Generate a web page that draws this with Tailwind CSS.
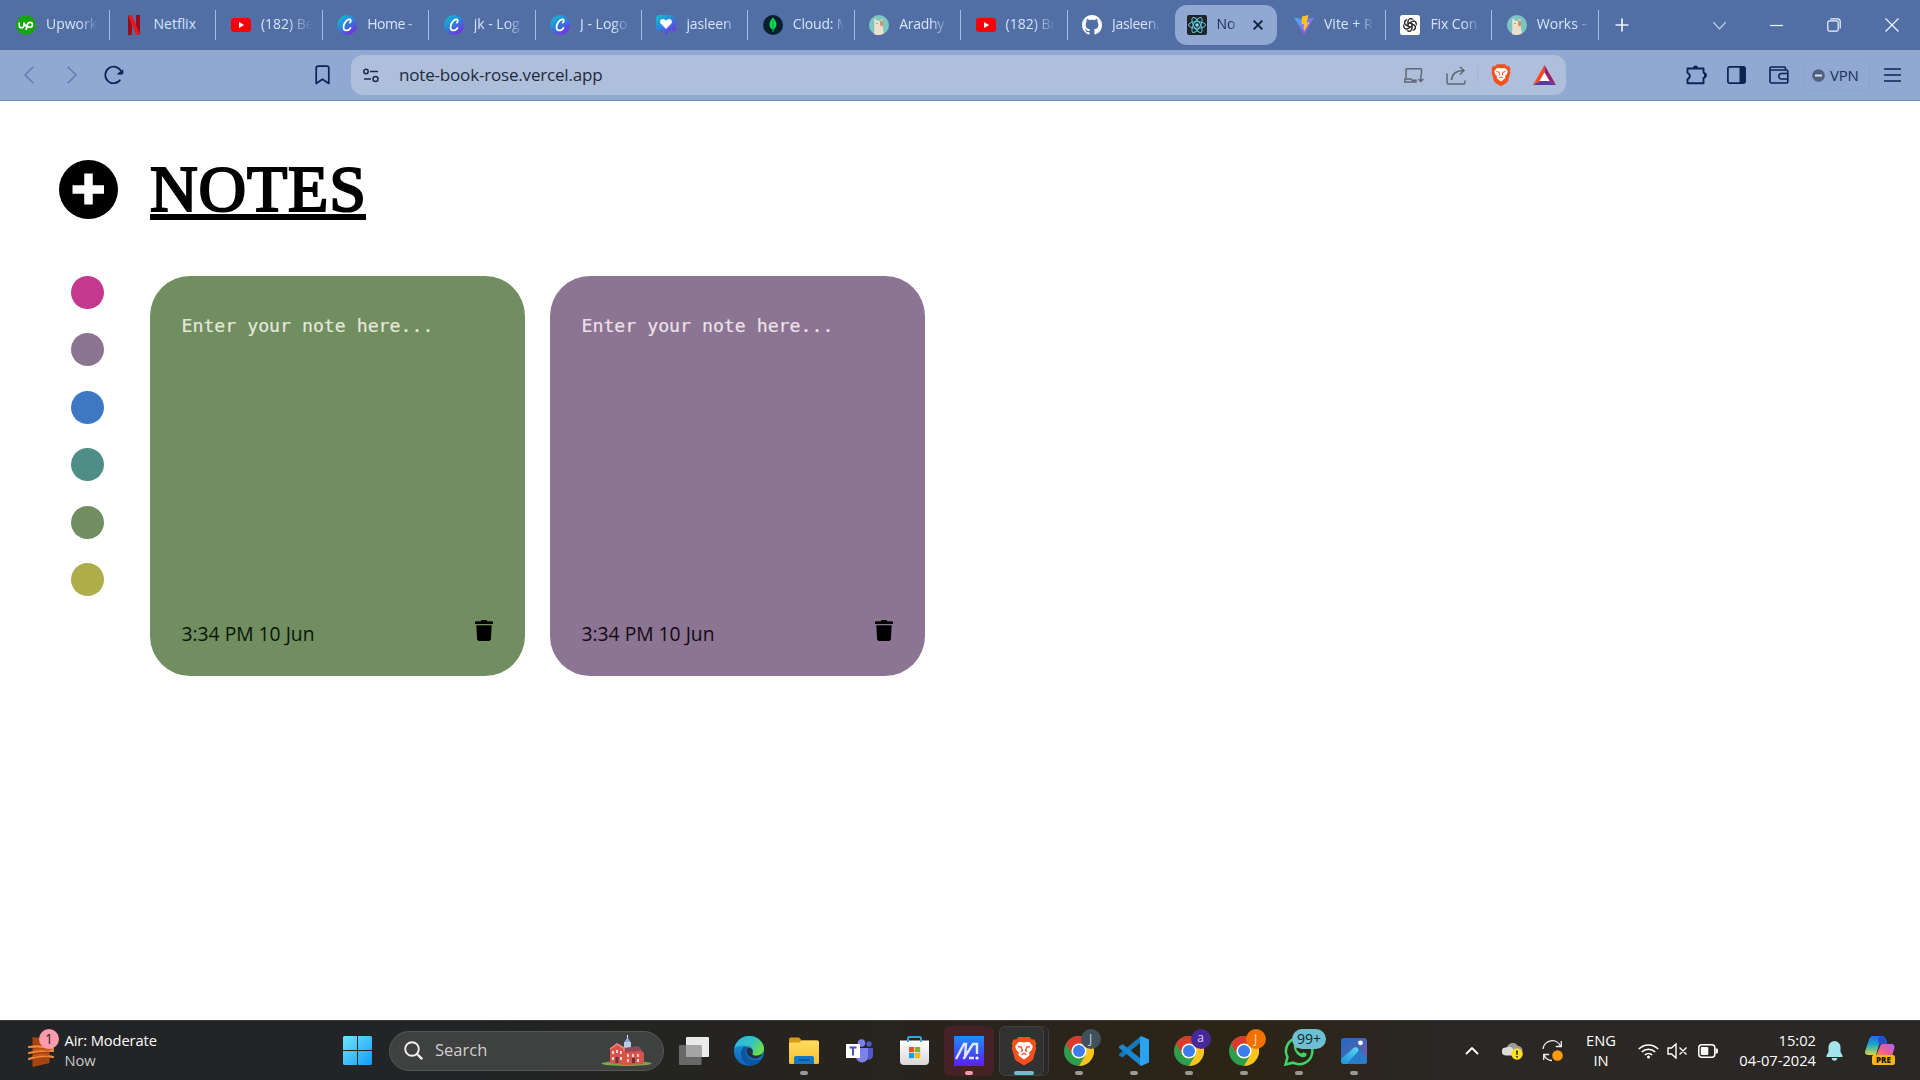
<!DOCTYPE html>
<html lang="en">
<head>
<meta charset="utf-8">
<title>Notes</title>
<script src="https://cdn.jsdelivr.net/npm/@tailwindcss/browser@4"></script>
</head>
<body class="w-[1920px] h-[1080px] overflow-hidden bg-white flex flex-col font-['Open_Sans',sans-serif]">

<svg class="absolute size-0">
  <defs>
    <linearGradient id="gCanva" x1="0" y1="0" x2=".7" y2="1"><stop offset="0" stop-color="#10c4cc"/><stop offset=".5" stop-color="#2a86dc"/><stop offset="1" stop-color="#7a2be0"/></linearGradient>
    <linearGradient id="gWin" gradientUnits="userSpaceOnUse" x1="0" y1="0" x2="29" y2="29"><stop offset="0" stop-color="#6fe4fd"/><stop offset="1" stop-color="#149cf5"/></linearGradient>
    <linearGradient id="gEdge" x1="0" y1="0" x2="1" y2=".5"><stop offset="0" stop-color="#2fb3e8"/><stop offset=".6" stop-color="#35c4c4"/><stop offset="1" stop-color="#6ddc4a"/></linearGradient>
    <linearGradient id="gEdge2" x1="0" y1="0" x2="0" y2="1"><stop offset="0" stop-color="#1b9de2"/><stop offset="1" stop-color="#0f62b8"/></linearGradient>
    <linearGradient id="gFold" x1="0" y1="0" x2="0" y2="1"><stop offset="0" stop-color="#ffdc62"/><stop offset="1" stop-color="#f8bf2c"/></linearGradient>
    <linearGradient id="gAsus" x1="0" y1="0" x2="0" y2="1"><stop offset="0" stop-color="#1f8cf5"/><stop offset="1" stop-color="#5a1ff2"/></linearGradient>
    <linearGradient id="gVite" x1="0" y1="0" x2="1" y2="1"><stop offset="0" stop-color="#41b8f5"/><stop offset="1" stop-color="#bd34fe"/></linearGradient>
    <linearGradient id="gPhoto" x1="0" y1="0" x2="1" y2="1"><stop offset="0" stop-color="#1c6cc0"/><stop offset="1" stop-color="#7a5aa8"/></linearGradient>
    <linearGradient id="gPhoto2" x1="0" y1="1" x2="1" y2="0"><stop offset="0" stop-color="#1690d8"/><stop offset="1" stop-color="#5fd8f5"/></linearGradient>
    <linearGradient id="gCopA" x1="0" y1="0" x2="0" y2="1"><stop offset="0" stop-color="#1c6be8"/><stop offset=".45" stop-color="#18a8c8"/><stop offset="1" stop-color="#d8d840"/></linearGradient>
    <linearGradient id="gCopB" x1="1" y1="0" x2="0" y2="1"><stop offset="0" stop-color="#a866f0"/><stop offset=".6" stop-color="#f0608c"/><stop offset="1" stop-color="#f89040"/></linearGradient>
    <linearGradient id="gStore" x1="0" y1="0" x2="0" y2="1"><stop offset="0" stop-color="#ffffff"/><stop offset="1" stop-color="#d8d8d8"/></linearGradient>
  </defs>
  <symbol id="canva" viewBox="0 0 20 20"><circle cx="10" cy="10" r="10" fill="url(#gCanva)"/><path d="M12.900 7.600c1-.8 1.300-2.800.1-3.200C10.600 3.600 6.600 7.800 6.500 12c-.1 4.600 4.700 4.300 7 .9" fill="none" stroke="#fff" stroke-width="1.700" stroke-linecap="round"/></symbol>
  <symbol id="youtube" viewBox="0 0 20 20"><rect y="3" width="20" height="14" rx="3.200" fill="#f60202"/><path d="M8 7v6l5.200-3z" fill="#fff"/></symbol>
  <symbol id="llama" viewBox="0 0 20 20"><circle cx="10" cy="10" r="10" fill="#7cc6c0"/><path d="M5 19c.4-4 .3-8 .2-11C5 5 5.500 3.300 6.400 3.500c1 .2 1 1.800 1.400 2.300h3.600c.5-.8.8-1.900 1.600-1.700 1 .3.8 2.300.6 3.800-.3 4 1 7.500 1.200 10.300-2.500 2.300-7.500 2.300-9.800.800z" fill="#ece0cc"/><path d="M11.500 5.500c2-.5 3 .5 2.800 3.500-.2 2-1.500 2.700-2.600 2-1-.8-.9-4-.2-5.500z" fill="#c9966c"/><circle cx="8" cy="8.500" r=".6" fill="#6b5a48"/></symbol>
  <symbol id="brave" viewBox="0 0 26 30"><path d="M7.500 1h11l2.300 2.600 2.600-.3 1.900 4-.8 2.400.8 2-2.900 10.500c-.4 1.400-1.300 2.300-2.400 3.100L13 29.500l-7-4.200c-1.100-.8-2-1.700-2.400-3.100L.7 11.700l.8-2-.8-2.400 1.900-4 2.600.3z" fill="#f4501e"/><path d="M13 6.500l2.600-.6 3.200.3 3 4-1 3.500-2.700 3 .6 2.300-2.200 2L13 23.500 9.500 21l-2.200-2 .6-2.300-2.700-3-1-3.500 3-4 3.200-.3z" fill="#fff"/><path d="M7 10.500l3.500.8.800 3.500-1.300 1.200M19 10.500l-3.500.8-.8 3.500 1.300 1.200M10.500 18.700l2.500-1.200 2.500 1.200" fill="none" stroke="#f4501e" stroke-width="1.300"/></symbol>
  <symbol id="chrome" viewBox="0 0 30 30"><circle cx="15" cy="15" r="15" fill="#2f9e4a"/><path d="M2 7.500A15 15 0 0 1 28 7.500H15L8.500 18.700z" fill="#db3a2f"/><path d="M28 7.500A15 15 0 0 1 15 30l6.500-11.200V7.500z" fill="#fcc31c"/><circle cx="15" cy="15" r="7.600" fill="#fff"/><circle cx="15" cy="15" r="6" fill="#3b7ded"/></symbol>
  <symbol id="trash" viewBox="0 0 18 21"><path d="M6 1.200C6 .5 6.500 0 7.200 0h3.600c.7 0 1.200.5 1.200 1.200h4.700c.7 0 1.300.5 1.300 1.200V4H0V2.400c0-.7.6-1.200 1.300-1.200zM1.300 5.200h15.400l-.8 13.900c-.1 1.100-.9 1.900-2 1.900H4.100c-1.100 0-1.900-.8-2-1.900z"/></symbol>
</svg>

<!-- Tab strip -->
<header class="h-[50px] shrink-0 bg-[#516fa5] flex items-center text-[14px] leading-[20px] text-[#d6e4fb] [&_span]:mb-[2px]">
  <nav class="flex items-center w-[1599px] pl-[3.600px] h-full shrink-0">
    <div class="w-[106.400px] h-[30px] shrink-0 flex items-center pl-[12.400px] gap-[10px] border-r border-[#a3bce6]">
      <svg class="size-5 shrink-0" viewBox="0 0 20 20"><circle cx="10" cy="10" r="10" fill="#16a50d"/><path d="M3.200 7.500v3a2.300 2.300 0 0 0 4.600 0v-3c.8 2.200 2 4.600 4 5.300M10 15l1.300-5.400c.5-1.800 1.700-2.200 2.700-2.200a2.400 2.400 0 0 1 0 4.900c-1.500 0-2.400-.8-3.200-2" fill="none" stroke="#fff" stroke-width="1.600"/></svg>
      <span class="w-[52px] overflow-hidden whitespace-nowrap mask-r-from-65% mask-r-to-100%">Upwork</span></div>
    <div class="w-[106.400px] h-[30px] shrink-0 flex items-center pl-[14.500px] gap-[9px] border-r border-[#a3bce6]">
      <svg class="size-5 shrink-0" viewBox="0 0 20 20"><path d="M4 0h4v20H4zM12 0h4v20h-4z" fill="#a00a16"/><path d="M4 0h4l8 20h-4z" fill="#e21a26"/></svg>
      <span class="w-[52px] overflow-hidden whitespace-nowrap">Netflix</span></div>
    <div class="w-[106.400px] h-[30px] shrink-0 flex items-center pl-[14.500px] gap-[10px] border-r border-[#a3bce6]">
      <svg class="size-5 shrink-0"><use href="#youtube"/></svg>
      <span class="w-[52px] overflow-hidden whitespace-nowrap mask-r-from-50% mask-r-to-100%">(182) Be</span></div>
    <div class="w-[106.400px] h-[30px] shrink-0 flex items-center pl-[14.500px] gap-[10px] border-r border-[#a3bce6]">
      <svg class="size-5 shrink-0"><use href="#canva"/></svg>
      <span class="w-[52px] overflow-hidden whitespace-nowrap tracking-[-0.500px] mask-r-from-75% mask-r-to-110%">Home -</span></div>
    <div class="w-[106.400px] h-[30px] shrink-0 flex items-center pl-[14.500px] gap-[10px] border-r border-[#a3bce6]">
      <svg class="size-5 shrink-0"><use href="#canva"/></svg>
      <span class="w-[50px] overflow-hidden whitespace-nowrap mask-r-from-65% mask-r-to-100%">jk - Log</span></div>
    <div class="w-[106.400px] h-[30px] shrink-0 flex items-center pl-[14.500px] gap-[10px] border-r border-[#a3bce6]">
      <svg class="size-5 shrink-0"><use href="#canva"/></svg>
      <span class="w-[50px] overflow-hidden whitespace-nowrap mask-r-from-65% mask-r-to-100%">J - Logo</span></div>
    <div class="w-[106.400px] h-[30px] shrink-0 flex items-center pl-[14.500px] gap-[10px] border-r border-[#a3bce6]">
      <svg class="size-5 shrink-0" viewBox="0 0 20 20"><path d="M2 0h13l5 4v11l-7 1-3 4-2-4H2L0 14V2z" fill="url(#gCanva)"/><path d="M10 14L4.600 8.500C2.500 5 7.500 2 10 5.800 12.500 2 17.500 5 15.400 8.500z" fill="#fff"/></svg>
      <span class="w-[50px] overflow-hidden whitespace-nowrap tracking-[-0.100px] mask-r-from-75% mask-r-to-110%">jasleen</span></div>
    <div class="w-[106.400px] h-[30px] shrink-0 flex items-center pl-[14.500px] gap-[10px] border-r border-[#a3bce6]">
      <svg class="size-5 shrink-0" viewBox="0 0 20 20"><circle cx="10" cy="10" r="10" fill="#06202f"/><path d="M10 2.500c5 5.500 4 9.500.4 12.500V17h-.8v-2C6 12 5 8 10 2.500z" fill="#0ade55"/><path d="M10 5v10" stroke="#078a3c" stroke-width=".8"/></svg>
      <span class="w-[51px] overflow-hidden whitespace-nowrap tracking-[-0.200px] mask-r-from-80% mask-r-to-100%">Cloud: M</span></div>
    <div class="w-[106.400px] h-[30px] shrink-0 flex items-center pl-[14.500px] gap-[10px] border-r border-[#a3bce6]">
      <svg class="size-5 shrink-0"><use href="#llama"/></svg>
      <span class="w-[50px] overflow-hidden whitespace-nowrap tracking-[-0.300px] mask-r-from-65% mask-r-to-100%">Aradhy</span></div>
    <div class="w-[106.400px] h-[30px] shrink-0 flex items-center pl-[14.500px] gap-[10px] border-r border-[#a3bce6]">
      <svg class="size-5 shrink-0"><use href="#youtube"/></svg>
      <span class="w-[50px] overflow-hidden whitespace-nowrap mask-r-from-55% mask-r-to-100%">(182) Br</span></div>
    <div class="w-[106px] h-[30px] shrink-0 flex items-center pl-[14.500px] gap-[10px]">
      <svg class="size-5 shrink-0" viewBox="0 0 16 16"><path fill="#fff" d="M8 0C3.580 0 0 3.580 0 8c0 3.540 2.290 6.530 5.470 7.590.4.070.550-.170.550-.380 0-.190-.010-.820-.010-1.490-2.010.370-2.530-.490-2.690-.940-.090-.230-.480-.940-.820-1.130-.280-.150-.680-.520-.010-.530.630-.010 1.080.580 1.230.820.720 1.210 1.870.870 2.330.660.070-.520.280-.870.510-1.070-1.780-.200-3.640-.890-3.640-3.950 0-.870.310-1.590.820-2.150-.080-.200-.360-1.020.080-2.120 0 0 .670-.210 2.200.820.640-.180 1.320-.270 2-.270s1.360.090 2 .270c1.530-1.040 2.200-.820 2.200-.820.440 1.100.160 1.920.080 2.120.510.560.820 1.270.820 2.150 0 3.070-1.870 3.750-3.650 3.950.290.250.540.730.540 1.480 0 1.070-.010 1.930-.010 2.200 0 .210.150.460.550.380A8.010 8.010 0 0 0 16 8c0-4.420-3.580-8-8-8z"/></svg>
      <span class="w-[50px] overflow-hidden whitespace-nowrap tracking-[-0.300px] mask-r-from-70% mask-r-to-100%">Jasleen.</span></div>
    <div class="w-[102px] h-10 ml-[1px] mr-[3px] shrink-0 flex items-center pl-[12px] gap-[10px] rounded-[12px] bg-[#90a8d2] text-[#1c2f55]">
      <svg class="size-5 shrink-0" viewBox="0 0 20 20"><rect width="20" height="20" rx="2" fill="#1f2428"/><g fill="none" stroke="#5fc9dc" stroke-width="1"><ellipse cx="10" cy="10" rx="8.500" ry="3.300"/><ellipse cx="10" cy="10" rx="8.500" ry="3.300" transform="rotate(60 10 10)"/><ellipse cx="10" cy="10" rx="8.500" ry="3.300" transform="rotate(120 10 10)"/></g><circle cx="10" cy="10" r="1.700" fill="#7fe2f5"/></svg>
      <span class="w-[21px] overflow-hidden whitespace-nowrap mask-r-from-60% mask-r-to-110%">No</span>
      <svg class="size-[10px] ml-[5px] shrink-0" viewBox="0 0 10 10"><path d="M.7.700l8.600 8.600M9.300.700L.700 9.300" stroke="#0d1f40" stroke-width="1.900"/></svg></div>
    <div class="w-[106.400px] h-[30px] shrink-0 flex items-center pl-[14.500px] gap-[10px] border-r border-[#a3bce6]">
      <svg class="size-5 shrink-0" viewBox="0 0 20 20"><path d="M0 2.500l10 2L20 2.500 10.200 19.500z" fill="url(#gVite)"/><path d="M14.500 0L8 1.400 7.500 9.500l2.700-.600-.800 4 .900 3L15.500 7l-3 .5L14.500 0z" fill="#ffc21c"/></svg>
      <span class="w-[49px] overflow-hidden whitespace-nowrap mask-r-from-75% mask-r-to-100%">Vite + R</span></div>
    <div class="w-[106.400px] h-[30px] shrink-0 flex items-center pl-[14.500px] gap-[10px] border-r border-[#a3bce6]">
      <svg class="size-5 shrink-0" viewBox="0 0 20 20"><rect width="20" height="20" rx="2.500" fill="#fff"/><g fill="none" stroke="#222" stroke-width="1"><path id="petal" d="M8 11.100V6.500c0-3.300 3.900-4 5.400-1.600M8 8.900l3.900-2.300c2.300-1.200 4.300.5 4.100 2.600"/><use href="#petal" transform="rotate(60 10 10)"/><use href="#petal" transform="rotate(120 10 10)"/><use href="#petal" transform="rotate(180 10 10)"/><use href="#petal" transform="rotate(240 10 10)"/><use href="#petal" transform="rotate(300 10 10)"/></g></svg>
      <span class="w-[51px] overflow-hidden whitespace-nowrap tracking-[-0.100px] mask-r-from-65% mask-r-to-100%">Fix Con</span></div>
    <div class="w-[106.400px] h-[30px] shrink-0 flex items-center pl-[14.500px] gap-[10px] border-r border-[#a3bce6]">
      <svg class="size-5 shrink-0"><use href="#llama"/></svg>
      <span class="w-[52px] overflow-hidden whitespace-nowrap mask-r-from-75% mask-r-to-100%">Works –</span></div>
  </nav>
  <svg class="size-[14px] ml-[16px]" viewBox="0 0 14 14"><path d="M7 .500v13M.500 7h13" stroke="#eaf2ff" stroke-width="1.700"/></svg>
  <div class="ml-auto mr-[21px] flex items-center gap-[44px]">
    <svg class="size-[13px]" viewBox="0 0 13 13" fill="none" stroke="#c4d6f5" stroke-width="1.200"><path d="M.3 3.200l6.200 6.600 6.200-6.600"/></svg>
    <svg class="size-[13px]" viewBox="0 0 13 13"><path d="M0 6.500h13" stroke="#eef4ff" stroke-width="1.200"/></svg>
    <svg class="size-[14px]" viewBox="0 0 14 14" fill="none" stroke="#eef4ff" stroke-width="1.200"><rect x=".8" y="2.800" width="10.400" height="10.400" rx="1.800"/><path d="M3.200 .800h7.300a2.700 2.700 0 0 1 2.700 2.700v7"/></svg>
    <svg class="size-[14px]" viewBox="0 0 14 14"><path d="M.5.500l13 13M13.500.500l-13 13" stroke="#eef4ff" stroke-width="1.300"/></svg>
  </div>
</header>

<!-- Address bar -->
<div class="h-[51px] shrink-0 bg-[#90a8d2] border-b border-[#6e8bc0] flex items-center pl-[24px]">
  <svg class="w-[10px] h-[18px]" viewBox="0 0 10 18" fill="none" stroke="#647cac" stroke-width="1.500"><path d="M9.300 .700L1 9l8.300 8.300"/></svg>
  <svg class="w-[10px] h-[18px] ml-[33px]" viewBox="0 0 10 18" fill="none" stroke="#647cac" stroke-width="1.500"><path d="M.7 .700L9 9 .700 17.300"/></svg>
  <svg class="size-5 ml-[27px]" viewBox="0 0 20 20"><path d="M17 6.200A8.300 8.300 0 1 0 16.300 14.800" fill="none" stroke="#0b2453" stroke-width="1.700"/><path d="M18.800 5v3.500a.6.600 0 0 1-.6.600h-4.600z" fill="#0b2453" stroke="#0b2453"/></svg>
  <svg class="w-[15px] h-5 ml-[191px]" viewBox="0 0 15 20"><path d="M1.200 18.500V3.200a2 2 0 0 1 2-2h8.600a2 2 0 0 1 2 2v15.300l-6.300-4.200z" fill="none" stroke="#0b2453" stroke-width="1.700" stroke-linejoin="round"/></svg>
  <div class="ml-[21px] w-[1215px] h-10 rounded-[12px] bg-[#aebfdc] flex items-center pl-[12px] pr-[10px] text-[#232b3a]">
    <svg class="w-[16px] h-[15px]" viewBox="0 0 16 15" fill="none" stroke="#1d2a44" stroke-width="1.500"><circle cx="3" cy="3.500" r="2.200"/><path d="M7 3.500h8M1 11h7"/><circle cx="12.500" cy="11" r="2.500"/></svg>
    <span class="ml-[20px] text-[17px] tracking-[-0.180px]">note-book-rose.vercel.app</span>
    <svg class="w-5 h-[15px] ml-auto" viewBox="0 0 20 15" fill="none" stroke="#5f6773" stroke-width="1.500"><path d="M17.500 7V1.500a.7.700 0 0 0-.7-.7H2.700a.7.700 0 0 0-.7.700V10M.8 14V11h6l1.500 1.300H12V14zM16.800 7v6.500M14.300 11l2.500 2.500 2.700-2.500"/></svg>
    <svg class="w-[20px] h-[19px] ml-[22px]" viewBox="0 0 20 19" fill="none" stroke="#5f6773" stroke-width="1.500"><path d="M1 7.500v9a1.500 1.500 0 0 0 1.500 1.500h15a1.500 1.500 0 0 0 1.500-1.500v-2M5.500 14C6 8 10 4.500 18 4.500M14 1l4 3.500-4 4"/></svg>
    <div class="w-px h-4 ml-[11px] bg-[#a2b4d6]"></div>
    <svg class="w-[20px] h-[24px] ml-[13px]"><use href="#brave"/></svg>
    <svg class="w-[23px] h-5 ml-[22px]" viewBox="0 0 23 20"><path d="M11.500 0L0 20l7-4 4.500-8.500z" fill="#ff4a1c"/><path d="M11.500 0L23 20l-7-4-4.500-8.500z" fill="#9c1f6c"/><path d="M0 20h23l-7-4H7z" fill="#5a3aa0"/><path d="M11.500 7.500L6.500 16h10z" fill="#fff"/></svg>
  </div>
  <svg class="w-[21px] h-5 ml-[120px]" viewBox="0 0 21 20"><path d="M1.500 3.500h16v4.200a2.700 2.700 0 0 1 0 5.300v5.200h-16v-4a3.400 3.400 0 0 0 0-6.400z" fill="none" stroke="#0b2453" stroke-width="1.900" stroke-linejoin="round"/><path d="M7 3a2.500 2.500 0 0 1 5 0zM18 7.500a2.700 2.700 0 0 1 0 5.500z" fill="#0b2453"/></svg>
  <svg class="w-[19px] h-[18px] ml-[20px]" viewBox="0 0 19 18"><rect x=".9" y=".9" width="17.200" height="16.200" rx="1.500" fill="none" stroke="#0b2453" stroke-width="1.700"/><path d="M12.500 1h5.500v16h-5.500z" fill="#0b2453"/></svg>
  <svg class="w-[20px] h-[18px] ml-[23px]" viewBox="0 0 20 18" fill="none" stroke="#0b2453" stroke-width="1.600"><path d="M16.500 4V2.300A1.300 1.300 0 0 0 15.200 1H2.300A1.300 1.300 0 0 0 1 2.300v13A1.700 1.700 0 0 0 2.700 17h14.600a1.500 1.500 0 0 0 1.500-1.500v-10A1.500 1.500 0 0 0 17.300 4H1M19 7.500h-6.500a2.500 2.500 0 0 0 0 5.500H19"/></svg>
  <div class="ml-[14px] w-[67px] h-8 rounded-[6px] border border-[#8ba2cd] flex items-center pl-[8px] gap-[5px]">
    <svg class="size-[13px]" viewBox="0 0 13 13"><circle cx="6.500" cy="6.500" r="6.300" fill="#51617f"/><path d="M3 6.500h7" stroke="#dbe5f6" stroke-width="2"/></svg>
    <span class="text-[15px] text-[#1d3157] tracking-[-0.200px]">VPN</span>
  </div>
  <svg class="w-[17px] h-[14px] ml-[14px]" viewBox="0 0 17 14"><path d="M0 1h17M0 7h17M0 13h17" stroke="#0b2453" stroke-width="1.300"/></svg>
</div>

<!-- Notes app -->
<main class="flex-1 min-h-0 flex pt-[59px] pl-[59px]">
  <aside class="w-[59px] flex flex-col items-start">
    <svg class="size-[59px]" viewBox="0 0 59 59"><circle cx="29.500" cy="29.500" r="29.500"/><path d="M29.500 13.500v31M13.500 29.500h31.500" stroke="#fff" stroke-width="8.500"/></svg>
    <div class="mt-[57px] ml-[12px] flex flex-col gap-[24.400px]">
      <div class="size-[33px] rounded-full bg-[#c53890]"></div>
      <div class="size-[33px] rounded-full bg-[#8b7592]"></div>
      <div class="size-[33px] rounded-full bg-[#3f78c2]"></div>
      <div class="size-[33px] rounded-full bg-[#4f8e86]"></div>
      <div class="size-[33px] rounded-full bg-[#708e5f]"></div>
      <div class="size-[33px] rounded-full bg-[#adad4a]"></div>
    </div>
  </aside>
  <section class="ml-[32px]">
    <h1 class="w-[216px] h-[60px] border-b-[6px] border-black leading-[57px] text-[66px] tracking-[0.800px] whitespace-nowrap text-black font-['Liberation_Serif',serif] [-webkit-text-stroke:2.200px_black]">NOTES</h1>
    <div class="mt-[56px] flex gap-[25px]">
      <article class="w-[375px] h-[400px] rounded-[40px] bg-[#708e5f] flex flex-col justify-between pl-[31.500px] pr-[32px] pt-[36px] pb-[20px]">
        <p class="font-['DejaVu_Sans_Mono',monospace] text-[18.200px] leading-[28px] text-[#e6e8de] [-webkit-text-stroke:0.200px_#e6e8de]">Enter your note here...</p>
        <footer class="flex justify-between items-start h-[36px]"><span class="text-[19.300px] leading-[27px] text-[#0c1408] whitespace-nowrap">3:34 PM 10 Jun</span><svg class="w-[18px] h-[21px]"><use href="#trash"/></svg></footer>
      </article>
      <article class="w-[375px] h-[400px] rounded-[40px] bg-[#8b7592] flex flex-col justify-between pl-[31.500px] pr-[32px] pt-[36px] pb-[20px]">
        <p class="font-['DejaVu_Sans_Mono',monospace] text-[18.200px] leading-[28px] text-[#eee2ea] [-webkit-text-stroke:0.200px_#eee2ea]">Enter your note here...</p>
        <footer class="flex justify-between items-start h-[36px]"><span class="text-[19.300px] leading-[27px] text-[#120a14] whitespace-nowrap">3:34 PM 10 Jun</span><svg class="w-[18px] h-[21px]"><use href="#trash"/></svg></footer>
      </article>
    </div>
  </section>
</main>

<!-- Taskbar -->
<footer class="h-[60px] shrink-0 border-t border-[#3a3a3a] bg-linear-to-r from-[#222425] from-25% via-[#2c2416] via-65% to-[#2a2724] to-75% flex items-center">
  <div class="w-[343px] shrink-0 flex items-center pl-[28px]">
    <div class="relative w-[31px] h-[36px]">
      <svg class="w-[26px] h-[32px] mt-[3px]" viewBox="0 0 26 32"><path d="M4.500 1l17 2v24L4.500 31z" fill="#a8440f"/><g fill="none" stroke="#f08a3c" stroke-width="2.200" stroke-linecap="round"><path d="M1 11q12-2 24 2"/><path d="M1 17q12-3 24-2"/><path d="M1 23q12-5 24-2"/></g><path d="M5 14.500q8-2 16 0M5 20.500q8-3 16-1" stroke="#c8581c" stroke-width="2" fill="none"/></svg>
      <span class="absolute -top-[4px] left-[11px] size-5 rounded-full bg-[#fb9bab] text-[#3a1a20] text-[14px] leading-5 text-center">1</span>
    </div>
    <div class="ml-[5.500px] -mt-[2px] leading-[20px] text-[14.700px] tracking-[-0.100px]"><p class="text-white">Air: Moderate</p><p class="text-[#c9c9c9]">Now</p></div>
  </div>
  <svg class="size-[29px] shrink-0" viewBox="0 0 29 29" fill="url(#gWin)"><path d="M1 0h13v14H0V1zM15 0h13l1 1v13H15zM0 15h14v14H1l-1-1zM15 15h14v13l-1 1H15z"/></svg>
  <div class="ml-[17px] w-[275px] h-10 shrink-0 rounded-full bg-[#3f4040] border border-[#575757] flex items-center pl-[14px] pr-[11px]">
    <svg class="size-[19px]" viewBox="0 0 19 19"><circle cx="8" cy="8" r="6.800" fill="none" stroke="#f0f0f0" stroke-width="1.900"/><path d="M13 13l5.200 5.200" stroke="#f0f0f0" stroke-width="2.400"/></svg>
    <span class="ml-[12px] text-[16.500px] text-[#cfcfcf]">Search</span>
    <svg class="w-[51px] h-[31px] ml-auto" viewBox="0 0 51 31"><ellipse cx="25.500" cy="28.500" rx="25" ry="2.500" fill="#7ea54a"/><path d="M23 7h7v6h-7z" fill="#b9cbe8"/><path d="M26.500 0v3" stroke="#e8eefc"/><path d="M23.500 7l3-5 3 5z" fill="#8fa9d6"/><path d="M9 14l7-5 7 4 16 2 4 3v11l-20 1-14-2z" fill="#d9534a"/><path d="M23 13l14-2 5 5-18 1z" fill="#8a4a5a"/><path d="M9 14l7-5 7 4v3" fill="none" stroke="#f08a78" stroke-width="1.500"/><g fill="#e8d4d8"><path d="M11 16h2v3h-2zM15 15h2v3h-2zM19 16h2v3h-2zM11 22h2v3h-2zM19 22h2v3h-2zM26 19h2v3h-2zM31 19h2v3h-2zM36 19h2v3h-2zM26 24h2v3h-2zM36 24h2v3h-2z"/></g><path d="M14.500 22h3v6h-3zM31 23h3v5h-3z" fill="#6a3040"/></svg>
  </div>
  <div class="ml-[2.500px] flex h-full">
    <div class="w-[55px] flex items-center justify-center"><svg class="w-[30px] h-[28px]" viewBox="0 0 30 28"><rect x="7" y="0" width="23" height="20" rx="1" fill="#eaeaea"/><rect y="8" width="22.500" height="20" rx="1" fill="#6f6f6f" fill-opacity=".92"/><path d="M7 8h15.500v12H7z" fill="#a5a5a5"/></svg></div>
    <div class="w-[55px] flex items-center justify-center"><svg class="size-[30px]" viewBox="0 0 30 30"><circle cx="15" cy="15" r="15" fill="url(#gEdge2)"/><path d="M9.500 11C4 17 8 27 16.500 29.500c5-.3 9-3 11.300-7C21 26.500 12 23 11.800 16.500c0-2 .8-3.600 2-4.700-1.300-.9-2.800-1.200-4.300-.8z" fill="#0d559f"/><path d="M.3 12.500C2 5 8 0 15 0c9 0 15 6.500 15 12.500 0 5-4 7.300-7.800 7.300-3.700 0-4.400-1.300-3.700-2.500 1.500-2.500.2-6.800-5-7.300C7.500 9.300 2 10 .3 12.500z" fill="url(#gEdge)"/><path d="M14.500 11.800c3 0 5 2.500 4 5.300-.8 1.700.5 2.700 3.700 2.700 2.300 0 4.700-1 6.300-2.500-1 3-3.500 5-7 5.200-5 .2-9.500-3.700-9-7.700.2-1.300 1-2.400 2-3z" fill="#203040"/></svg></div>
    <div class="w-[55px] relative flex items-center justify-center"><svg class="w-[30px] h-[27px]" viewBox="0 0 30 27"><path d="M0 2.500A2 2 0 0 1 2 .500h8l3 3H28a2 2 0 0 1 2 2V10H0z" fill="#d99a13"/><path d="M0 5.500h10l3-2h15.500A1.500 1.500 0 0 1 30 5v20.500a1.500 1.500 0 0 1-1.500 1.500h-27A1.500 1.500 0 0 1 0 25.500z" fill="url(#gFold)"/><path d="M5 27v-6a2 2 0 0 1 2-2h16a2 2 0 0 1 2 2v6z" fill="#1478c8"/><path d="M9.500 23h11" stroke="#0a4f8c" stroke-width="1.500"/></svg><i class="absolute bottom-[5px] left-[23.500px] w-2 h-1 rounded-full bg-[#9a9a9a]"></i></div>
    <div class="w-[55px] flex items-center justify-center"><svg class="w-[28px] h-[24px]" viewBox="0 0 28 24"><circle cx="16.500" cy="4" r="3.800" fill="#7b83eb"/><circle cx="24" cy="5" r="2.700" fill="#5059c9"/><path d="M19 9h9v7a4.500 4.500 0 0 1-7 4z" fill="#5059c9"/><path d="M11 9h12v8.500a6 6 0 0 1-12 0z" fill="#7b83eb"/><rect x="1" y="5" width="14" height="14" fill="#fff"/><path d="M4.500 8.500h7M8 8.500v8" stroke="#4b53bc" stroke-width="2"/></svg></div>
    <div class="w-[55px] flex items-center justify-center"><svg class="w-[29px] h-[29px]" viewBox="0 0 29 29"><path d="M8 5.500V2.200A1.200 1.200 0 0 1 9.200 1h10.600A1.200 1.200 0 0 1 21 2.200v3.300" fill="none" stroke="#2ea8e0" stroke-width="1.900"/><path d="M0 4.500h29V25a4 4 0 0 1-4 4H4a4 4 0 0 1-4-4z" fill="url(#gStore)"/><path d="M8 2v4M21 2v4" stroke="#2ea8e0" stroke-width="1.900"/><path d="M9 11h5.200v5.200H9z" fill="#e8502a"/><path d="M15 11h5.200v5.200H15z" fill="#7cb518"/><path d="M9 17h5.200v5.200H9z" fill="#1a9be8"/><path d="M15 17h5.200v5.200H15z" fill="#fbb90e"/></svg></div>
    <div class="w-[55px] relative flex items-center justify-center"><div class="w-[50px] h-[50px] rounded-[6px] bg-[#452225] flex items-center justify-center"><svg class="size-[30px]" viewBox="0 0 30 30"><path d="M0 0h30v30H0z" fill="url(#gAsus)"/><path d="M2 23L10 8h2l-1 14M9.500 23L19 8h4v10M15 22h5" fill="none" stroke="#dfe6ff" stroke-width="2.400"/><circle cx="23" cy="22" r="1.600" fill="#fff"/></svg></div><i class="absolute bottom-[5px] left-[23.500px] w-2 h-1 rounded-full bg-[#f59aa8]"></i></div>
    <div class="w-[55px] relative flex items-center"><div class="absolute left-[6px] w-[46px] h-[50px] rounded-[6px] border border-[#3c3c3c] bg-[#292929]"></div><div class="relative ml-[2px] w-[45px] h-[50px] rounded-[6px] border border-[#424242] bg-[#323232] flex items-center justify-center"><svg class="w-[26px] h-[30px] ml-[5px]"><use href="#brave"/></svg></div><i class="absolute bottom-[5px] left-[17px] w-5 h-1 rounded-full bg-[#6fbfd0]"></i></div>
    <div class="w-[55px] relative flex items-center justify-center"><svg class="size-[30px]"><use href="#chrome"/></svg><span class="absolute top-[8px] left-[29px] size-[20px] rounded-full bg-[#41515a] text-[#c8d4d8] text-[12px] leading-[19px] text-center">J</span><i class="absolute bottom-[5px] left-[23.500px] w-2 h-1 rounded-full bg-[#9a9a94]"></i></div>
    <div class="w-[55px] relative flex items-center justify-center"><svg class="size-[30px]" viewBox="0 0 30 30"><path d="M22 0l-1 7L3.500 21.500 0 19.500V18z" fill="#1578bc"/><path d="M0 10.500L3.500 8 21 22l1 8L0 12z" fill="#1b86cd"/><path d="M22 0l8 3.500v23L22 30l-1-1.500V1.500z" fill="#2ba2ef"/></svg><i class="absolute bottom-[5px] left-[23.500px] w-2 h-1 rounded-full bg-[#9a9a94]"></i></div>
    <div class="w-[55px] relative flex items-center justify-center"><svg class="size-[30px]"><use href="#chrome"/></svg><span class="absolute top-[8px] left-[29px] size-[20px] rounded-full bg-[#47289c] text-[#e0d4f5] text-[12px] leading-[18px] text-center">a</span><i class="absolute bottom-[5px] left-[23.500px] w-2 h-1 rounded-full bg-[#9a9a94]"></i></div>
    <div class="w-[55px] relative flex items-center justify-center"><svg class="size-[30px]"><use href="#chrome"/></svg><span class="absolute top-[8px] left-[29px] size-[20px] rounded-full bg-[#f07000] text-[#ffdcc0] text-[12px] leading-[19px] text-center">J</span><i class="absolute bottom-[5px] left-[23.500px] w-2 h-1 rounded-full bg-[#9a9a94]"></i></div>
    <div class="w-[55px] relative flex items-center justify-center"><svg class="size-[30px]" viewBox="0 0 30 30"><path d="M1.500 28.500l2-7.300A13.200 13.200 0 1 1 9 26.700z" fill="none" stroke="#3fd468" stroke-width="2.500"/><path d="M10 8c1-1.300 2-1 2.500.2l1 2.500c.2.800-1.500 1.700-1.200 2.300 1.200 2.300 2.700 3.600 5 4.500.700.300 1.500-1.500 2.200-1.200l2.800 1.300c.7.500.2 2.200-.7 3C17 24 8 15 10 8z" fill="#3fd468"/></svg><span class="absolute top-[8px] left-[20.500px] w-[34px] h-[20px] rounded-full bg-[#6cc0d2] text-[#10262c] text-[14px] leading-[20px] text-center">99+</span><i class="absolute bottom-[5px] left-[23.500px] w-2 h-1 rounded-full bg-[#9a9a94]"></i></div>
    <div class="w-[55px] relative flex items-center justify-center"><svg class="size-[26px]" viewBox="0 0 26 26"><rect width="26" height="26" rx="3" fill="url(#gPhoto)"/><path d="M0 20L13 9.500c2-1.500 4-.5 4.500 1L26 20v3a3 3 0 0 1-3 3H3a3 3 0 0 1-3-3z" fill="#2a7cc8"/><path d="M0 21.500L12.500 10c3-2.500 6.500 1 4 4L5.500 26H3a3 3 0 0 1-3-3z" fill="url(#gPhoto2)"/><circle cx="19.500" cy="4.800" r="2.400" fill="#fff"/></svg><i class="absolute bottom-[5px] left-[23.500px] w-2 h-1 rounded-full bg-[#9a9a94]"></i></div>
  </div>
  <div class="ml-auto flex items-center text-white text-[14.700px] leading-[20px] pr-[25px] h-full">
    <svg class="w-[14px] h-[9px]" viewBox="0 0 14 9"><path d="M1 8l6-6 6 6" fill="none" stroke="#fff" stroke-width="1.900"/></svg>
    <svg class="w-[21px] h-[18px] ml-[23px]" viewBox="0 0 21 18"><path d="M5 5.500a6 6 0 0 1 11-1.500 4.500 4.500 0 0 1 0 9H7z" fill="#9c9c9c"/><path d="M3.500 13.500a4 4 0 0 1 .5-8 5 5 0 0 1 7 1.500l3 6.500z" fill="#dcdcdc"/><circle cx="15" cy="12" r="5.800" fill="#ffe01a"/><path d="M15 8.500v4.300M15 14v1.600" stroke="#222" stroke-width="1.600"/></svg>
    <svg class="w-[21px] h-[22px] ml-[19px]" viewBox="0 0 21 22"><path d="M1 9A9.200 9.200 0 0 1 18.500 6M19.300 1v5.500h-5.500M1.700 20v-5.500h5.500M2 15a9 9 0 0 0 8 5.500" fill="none" stroke="#f0f0f0" stroke-width="1.300"/><circle cx="15.500" cy="15.500" r="5.300" fill="#ff9a0c"/></svg>
    <div class="w-[32px] ml-[22px] -mt-px text-center">ENG<br>IN</div>
    <svg class="w-[21px] h-[16px] ml-[21px]" viewBox="0 0 21 16" fill="none" stroke="#fff" stroke-width="1.600"><path d="M.800 6a13.700 13.700 0 0 1 19.400 0M3.800 9a9.500 9.500 0 0 1 13.400 0M6.800 12a5.200 5.200 0 0 1 7.400 0"/><circle cx="10.500" cy="14" r="1.500" fill="#fff" stroke="none"/></svg>
    <svg class="w-[21px] h-[16px] ml-[8px]" viewBox="0 0 21 16" fill="none" stroke="#fff" stroke-width="1.400"><path d="M1 5v6h3.500L9 15V1L4.500 5zM12.500 4.500l7 7M19.500 4.500l-7 7"/></svg>
    <svg class="w-[20px] h-[14px] ml-[10px]" viewBox="0 0 20 14"><rect x=".800" y=".800" width="16" height="12.400" rx="3" fill="none" stroke="#fff" stroke-width="1.500"/><rect x="2.800" y="3" width="7.500" height="8" rx="1" fill="#fff"/><path d="M17.500 4.500h1.200a1.200 1.200 0 0 1 1.200 1.200v2.600a1.200 1.200 0 0 1-1.200 1.200h-1.200z" fill="#fff"/></svg>
    <div class="w-[88px] ml-[10px] -mt-[2px] text-right whitespace-nowrap">15:02<br>04-07-2024</div>
    <svg class="w-[17px] h-[20px] ml-[10px]" viewBox="0 0 17 20"><path d="M8.500 0a6 6 0 0 1 6 6v5l2 3.500v1.500H.500v-1.500l2-3.500V6a6 6 0 0 1 6-6z" fill="#a4e4ec"/><path d="M5.800 17h5.400a2.700 2.700 0 0 1-5.400 0z" fill="#a4e4ec"/></svg>
    <div class="relative w-[30px] h-[30px] ml-[22px]">
      <svg class="size-[30px]" viewBox="0 0 30 30"><path d="M8 0h9c2.500 0 3.500 2 4.500 5l.800 2.500H17c-2 0-3 1-3.500 3L11 19H3c-2 0-3.500-1.500-2.800-4L4 3.500C4.600 1.500 6 0 8 0z" fill="url(#gCopA)"/><path d="M17 0c3 0 3.500 3 4.800 7.500H17c-1.500 0-2.500.5-3 2L13 3.500C13 2 14 .5 17 0z" fill="#1d4fd0"/><path d="M18 8h8c3 0 4 2 3.300 4.500L27 20H11l3.500-8.500C15.300 9 16 8 18 8z" fill="url(#gCopB)"/></svg>
      <span class="absolute bottom-[1px] left-[7px] w-[23px] h-[10px] rounded-[2px] bg-[#fcb514] text-[#201800] text-[8px] font-extrabold leading-[10px] text-center">PRE</span>
    </div>
  </div>
</footer>
</body>
</html>
